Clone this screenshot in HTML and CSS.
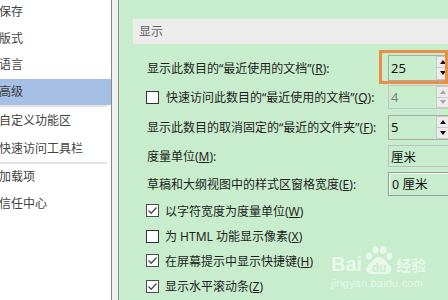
FILE: index.html
```html
<!DOCTYPE html>
<html lang="zh-CN">
<head>
<meta charset="utf-8">
<title>Word 选项 - 高级</title>
<link rel="stylesheet" href="styles.css">
</head>
<body>
<div class="window">
  <nav class="sidebar">
    <ul class="nav">
      <li class="nav-item">保存</li>
      <li class="nav-item">版式</li>
      <li class="nav-item">语言</li>
      <li class="nav-item active">高级</li>
      <li class="nav-sep"></li>
      <li class="nav-item tall">自定义功能区</li>
      <li class="nav-item tall">快速访问工具栏</li>
      <li class="nav-sep"></li>
      <li class="nav-item">加载项</li>
      <li class="nav-item">信任中心</li>
    </ul>
  </nav>
  <div class="gutter"></div>
  <main class="content">
    <div class="section-title">显示</div>

    <div class="row r1">
      <span class="label">显示此数目的“最近使用的文档”(<u>R</u>):</span>
      <div class="spin h26">
        <span class="spin-field">25</span>
        <span class="spin-btns"><span class="spin-btn"><span class="arrow-up"></span></span><span class="spin-btn"><span class="arrow-down"></span></span></span>
      </div>
    </div>

    <div class="row r2">
      <span class="check-label"><span class="checkbox"></span><span>快速访问此数目的“最近使用的文档”(<u>Q</u>):</span></span>
      <div class="spin h24 disabled">
        <span class="spin-field">4</span>
        <span class="spin-btns"><span class="spin-btn"><span class="arrow-up"></span></span><span class="spin-btn"><span class="arrow-down"></span></span></span>
      </div>
    </div>

    <div class="row r3">
      <span class="label">显示此数目的取消固定的“最近的文件夹”(<u>F</u>):</span>
      <div class="spin h25">
        <span class="spin-field">5</span>
        <span class="spin-btns"><span class="spin-btn"><span class="arrow-up"></span></span><span class="spin-btn"><span class="arrow-down"></span></span></span>
      </div>
    </div>

    <div class="row r4">
      <span class="label">度量单位(<u>M</u>):</span>
      <div class="combo">厘米</div>
    </div>

    <div class="row r5">
      <span class="label">草稿和大纲视图中的样式区窗格宽度(<u>E</u>):</span>
      <div class="textbox">0 厘米</div>
    </div>

    <div class="check-row r6">
      <span class="checkbox checked"><svg viewBox="0 0 11 11" width="11" height="11"><polyline points="1.5,5.5 4.2,8.2 9.5,2.5"/></svg></span>
      <span>以字符宽度为度量单位(<u>W</u>)</span>
    </div>
    <div class="check-row r7">
      <span class="checkbox"></span>
      <span>为 HTML 功能显示像素(<u>X</u>)</span>
    </div>
    <div class="check-row r8">
      <span class="checkbox checked"><svg viewBox="0 0 11 11" width="11" height="11"><polyline points="1.5,5.5 4.2,8.2 9.5,2.5"/></svg></span>
      <span>在屏幕提示中显示快捷键(<u>H</u>)</span>
    </div>
    <div class="check-row r9">
      <span class="checkbox checked"><svg viewBox="0 0 11 11" width="11" height="11"><polyline points="1.5,5.5 4.2,8.2 9.5,2.5"/></svg></span>
      <span>显示水平滚动条(<u>Z</u>)</span>
    </div>
  </main>

  <div class="focus-ring"></div>

  <div class="watermark">
    <div class="wm-brand">
      <span class="wm-bai">Bai</span>
      <svg class="wm-paw" viewBox="0 0 32 30" width="32" height="30">
        <ellipse cx="6" cy="11" rx="3" ry="3.6"/>
        <ellipse cx="12.5" cy="5" rx="3.2" ry="3.8"/>
        <ellipse cx="20" cy="5" rx="3.2" ry="3.8"/>
        <ellipse cx="26.5" cy="11" rx="3" ry="3.6"/>
        <path d="M16 12 C11 12 9 17 5.5 20 C2 23 3 29 8.5 29 L23.5 29 C29 29 30 23 26.5 20 C23 17 21 12 16 12 Z"/>
        <text x="16" y="27" class="wm-du">du</text>
      </svg>
      <span class="wm-jy">经验</span>
    </div>
    <div class="wm-url">jingyan.baidu.com</div>
  </div>
</div>
</body>
</html>
```
FILE: styles.css
```css
* {
  box-sizing: border-box;
  margin: 0;
  padding: 0;
}

html, body {
  width: 448px;
  height: 300px;
  overflow: hidden;
}

body {
  background: #f0f0f0;
  font-family: "Noto Sans", "Noto Sans CJK SC", sans-serif;
  font-size: 12px;
}

u {
  text-underline-offset: 1px;
}

.window {
  position: relative;
  display: flex;
  width: 448px;
  height: 300px;
  overflow: hidden;
}

/* ---------- left navigation ---------- */
.sidebar {
  flex: 0 0 112px;
  background: #ffffff;
  border-right: 1px solid #878a93;
  color: #444444;
}

.nav {
  list-style: none;
  margin-top: -1px;
}

.nav-item {
  height: 26.5px;
  line-height: 26.5px;
  text-indent: -1px;
  white-space: nowrap;
  overflow: hidden;
}

.nav-item.tall {
  height: 27.5px;
  line-height: 27.5px;
}

.nav-item.active {
  background: #a5bfe5;
  color: #3a3a3a;
}

.nav-sep {
  height: 2px;
  width: 107px;
  background: #e2e2e2;
}

.gutter {
  flex: 0 0 6px;
  background: #f0f0f0;
}

/* ---------- right content ---------- */
.content {
  flex: 1 1 auto;
  min-width: 0;
  background: #c7edcc;
  border-left: 1px solid #8d8d8d;
  padding-top: 19px;
  padding-left: 14px;
  color: #1e1e1e;
}

.section-title {
  height: 25px;
  line-height: 25px;
  background: #ececec;
  color: #626262;
  padding-left: 6px;
  margin-bottom: 9px;
  margin-right: -20px;
}

.row {
  display: grid;
  grid-template-columns: 241px 90px;
  align-items: center;
  padding-left: 14px;
  white-space: nowrap;
}

.check-row {
  display: flex;
  align-items: center;
  gap: 6px;
  padding-left: 13px;
  white-space: nowrap;
}

.r1 { height: 29px; }
.r2 { height: 30px; }
.r3 { height: 30px; }
.r4 { height: 28px; }
.r5 { height: 27px; }
.r6 { height: 27px; }
.r7 { height: 24px; }
.r8 { height: 25px; }
.r9 { height: 26px; }

.check-label {
  display: flex;
  align-items: center;
  gap: 7px;
  margin-left: -1px;
}

.checkbox {
  flex: 0 0 13px;
  width: 13px;
  height: 13px;
  border: 1px solid #333333;
  background: #ffffff;
  display: flex;
  align-items: center;
  justify-content: center;
}

.checkbox.checked {
  border-color: #4d4d4d;
}

.checkbox svg polyline {
  fill: none;
  stroke: #4a4a4a;
  stroke-width: 1.3;
}

/* spin boxes */
.spin {
  display: flex;
  width: 90px;
  border: 1px solid #a9a9a9;
  background: #c7edcc;
}

.h26 { height: 26px; }
.h25 { height: 25px; }
.h24 { height: 24px; }

.spin-field {
  flex: 0 0 47px;
  padding-left: 2px;
  font-size: 13px;
  display: flex;
  align-items: center;
  color: #111111;
}

.spin-btns {
  flex: 0 0 16px;
  display: flex;
  flex-direction: column;
}

.spin-btn {
  flex: 1 1 0;
  display: flex;
  align-items: center;
  padding-left: 3px;
  background: #ececec;
  border: 1px solid #c9c9c9;
}

.spin-btn + .spin-btn {
  border-top: none;
}

.arrow-up {
  width: 0;
  height: 0;
  border-left: 3.5px solid transparent;
  border-right: 3.5px solid transparent;
  border-bottom: 4px solid #111111;
}

.arrow-down {
  width: 0;
  height: 0;
  border-left: 3.5px solid transparent;
  border-right: 3.5px solid transparent;
  border-top: 4px solid #111111;
}

.spin.disabled {
  border-color: #c6c6c6;
}

.spin.disabled .spin-field {
  color: #7d7d7d;
}

.spin.disabled .arrow-up {
  border-bottom-color: #a3a3a3;
}

.spin.disabled .arrow-down {
  border-top-color: #a3a3a3;
}

.combo {
  height: 22px;
  width: 90px;
  border: 1px solid #bdbdbd;
  padding-left: 2px;
  font-size: 12.5px;
  display: flex;
  align-items: center;
  color: #111111;
}

.textbox {
  height: 24px;
  width: 90px;
  border: 1px solid #9a9a9a;
  box-shadow: inset 1px 1px 0 #f4faf4;
  padding-left: 3px;
  font-size: 12.5px;
  display: flex;
  align-items: center;
  color: #111111;
}

/* ---------- overlays ---------- */
.focus-ring {
  position: absolute;
  left: 379px;
  top: 50px;
  width: 69px;
  height: 34px;
  border: 3px solid #e98f45;
}

.watermark {
  position: absolute;
  left: 331px;
  top: 245px;
  color: rgba(255, 255, 255, 0.6);
  pointer-events: none;
}

.wm-brand {
  display: flex;
  align-items: flex-end;
  height: 30px;
}

.wm-bai {
  font-family: "Liberation Sans", sans-serif;
  font-weight: bold;
  font-size: 20px;
  line-height: 20px;
  margin-bottom: 1px;
}

.wm-paw {
  margin-left: 1px;
  fill: rgba(255, 255, 255, 0.6);
}

.wm-du {
  font-family: "Liberation Sans", sans-serif;
  font-weight: bold;
  font-size: 12px;
  text-anchor: middle;
  fill: #c7edcc;
}

.wm-jy {
  font-family: "Noto Sans CJK SC", sans-serif;
  font-weight: bold;
  font-size: 15px;
  line-height: 20px;
  margin-left: 1px;
}

.wm-url {
  font-family: "Liberation Sans", sans-serif;
  font-size: 11px;
  line-height: 14px;
  margin-top: 1px;
  letter-spacing: 0.2px;
}
```
